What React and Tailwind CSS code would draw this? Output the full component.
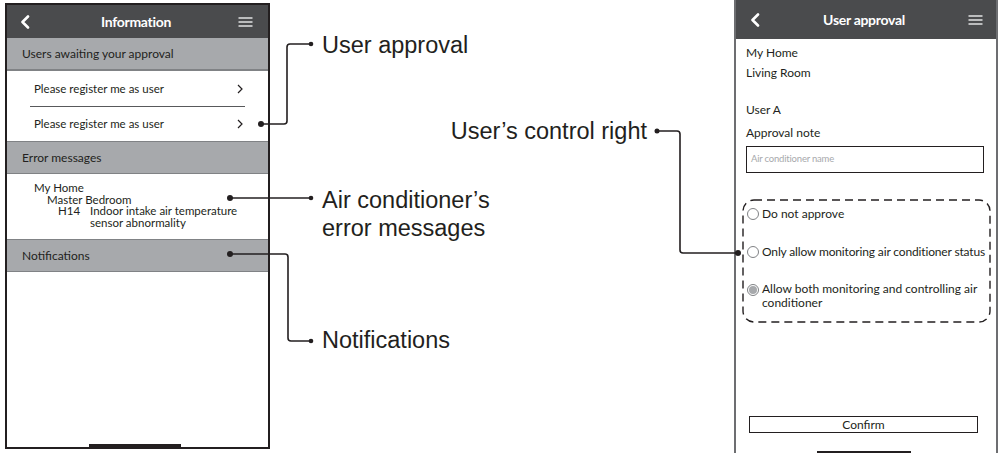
import React from "react";

const ink = "#231f20";

function Back() {
  return (
    <svg width="10" height="14" viewBox="0 0 10 14">
      <polyline points="8,1.5 2.5,7 8,12.5" fill="none" stroke="#fff" strokeWidth="2.6" strokeLinecap="round" strokeLinejoin="round" />
    </svg>
  );
}

function Menu() {
  return (
    <svg width="15" height="10" viewBox="0 0 15 10">
      <line x1="0.5" y1="1" x2="14.5" y2="1" stroke="#d9dadb" strokeWidth="1.6" />
      <line x1="0.5" y1="5" x2="14.5" y2="5" stroke="#d9dadb" strokeWidth="1.6" />
      <line x1="0.5" y1="9" x2="14.5" y2="9" stroke="#d9dadb" strokeWidth="1.6" />
    </svg>
  );
}

function Chevron() {
  return (
    <svg width="6" height="10" viewBox="0 0 6 10">
      <polyline points="1,1 5,5 1,9" fill="none" stroke={ink} strokeWidth="1.2" />
    </svg>
  );
}

function Band({ children }) {
  return (
    <div className="flex h-[33px] shrink-0 items-center border-y border-[#808285] bg-[#a7a9ac] pl-[15px] text-[12px] text-[#231f20]">
      {children}
    </div>
  );
}

function Radio({ on }) {
  return (
    <span className="mt-[2px] flex h-[12px] w-[12px] shrink-0 items-center justify-center rounded-full border border-[#808285] bg-white">
      {on && <span className="h-[8px] w-[8px] rounded-full bg-[#a7a9ac]" />}
    </span>
  );
}

function Callouts() {
  return (
    <svg className="pointer-events-none absolute inset-0" width="998" height="453" viewBox="0 0 998 453">
      <g fill="none" stroke={ink} strokeWidth="1.6">
        <path d="M261 124 H284 Q287 124 287 121 V47 Q287 44 290 44 H311" />
        <path d="M230 198 H311" />
        <path d="M230 254 H285 Q288 254 288 257 V338 Q288 341 291 341 H311" />
        <path d="M657 131 H677 Q680 131 680 134 V250 Q680 253 683 253 H738" />
        <rect x="743" y="200" width="247" height="122" rx="11" strokeWidth="1.4" strokeDasharray="8 5" />
      </g>
      <g fill={ink}>
        <circle cx="261" cy="124" r="3" />
        <circle cx="311" cy="44" r="2.3" />
        <circle cx="230" cy="198" r="3" />
        <circle cx="311" cy="198" r="2.3" />
        <circle cx="230" cy="254" r="3" />
        <circle cx="311" cy="341" r="2.3" />
        <circle cx="657" cy="131" r="2.5" />
        <circle cx="738" cy="253" r="3" />
      </g>
    </svg>
  );
}

export default function App() {
  return (
    <div className="relative flex h-[453px] w-[998px] overflow-hidden bg-white font-[Lato,sans-serif] text-[#231f20]">
      {/* Information screen */}
      <div className="ml-[5px] mt-[3px] flex h-[446px] w-[265px] shrink-0 flex-col border-2 border-[#231f20]">
        <div className="flex h-[33px] shrink-0 items-center justify-between bg-[#4a4b4d] pl-[13px] pr-[15px]">
          <Back />
          <span className="ml-[4px] text-[14px] font-bold tracking-[-0.3px] text-white">Information</span>
          <Menu />
        </div>
        <div className="flex h-[33px] shrink-0 items-center border-b-2 border-[#808285] bg-[#a7a9ac] pl-[15px] text-[12px]">
          Users awaiting your approval
        </div>
        <div className="flex h-[35px] shrink-0 items-center justify-between pl-[27px] pr-[25px] text-[11.5px]">
          <span>Please register me as user</span>
          <Chevron />
        </div>
        <div className="ml-[23px] h-px w-[215px] bg-[#58595b]" />
        <div className="flex h-[34px] shrink-0 items-center justify-between pl-[27px] pr-[25px] text-[11.5px]">
          <span>Please register me as user</span>
          <Chevron />
        </div>
        <Band>Error messages</Band>
        <div className="h-[65px] shrink-0 pl-[27px] pt-[8px] text-[11.5px] leading-[11.5px]">
          <div>My Home</div>
          <div className="pl-[13px]">Master Bedroom</div>
          <div className="flex pl-[24px]">
            <span className="w-[32px]">H14</span>
            <span>
              Indoor intake air temperature
              <br />
              sensor abnormality
            </span>
          </div>
        </div>
        <Band>Notifications</Band>
        <div className="flex flex-1 flex-col justify-end">
          <div className="ml-[82px] h-[3px] w-[92px] bg-[#231f20]" />
        </div>
      </div>

      {/* callout labels */}
      <div className="relative flex-1 font-['Liberation_Sans',Arial,sans-serif] text-[23.5px] leading-[28px]">
        <div className="absolute left-[52px] top-[31px]">User approval</div>
        <div className="absolute left-[52px] top-[186px]">
          Air conditioner’s
          <br />
          error messages
        </div>
        <div className="absolute left-[52px] top-[326px]">Notifications</div>
        <div className="absolute right-[87px] top-[117px] whitespace-nowrap">User’s control right</div>
      </div>

      {/* User approval screen */}
      <div className="flex h-[453px] w-[264px] shrink-0 flex-col border-x-2 border-[#6d6e71]">
        <div className="flex h-[39px] shrink-0 items-center justify-between bg-[#4a4b4d] pl-[14px] pr-[13px]">
          <Back />
          <span className="text-[14px] font-bold tracking-[-0.3px] text-white">User approval</span>
          <Menu />
        </div>
        <div className="flex flex-1 flex-col pl-[10px] text-[12px]">
          <div className="mt-[4px] leading-[20px]">My Home</div>
          <div className="leading-[20px]">Living Room</div>
          <div className="mt-[17px] leading-[20px]">User A</div>
          <div className="mt-[3px] leading-[20px]">Approval note</div>
          <div className="mt-[3px] flex h-[27px] w-[238px] items-center border-[1.5px] border-[#231f20] pl-[4px] text-[9.5px] tracking-[-0.2px] text-[#a7a9ac]">
            Air conditioner name
          </div>
          <div className="ml-[1px] mt-[33px] flex items-start gap-[3px] leading-[16px]">
            <Radio />
            <span>Do not approve</span>
          </div>
          <div className="ml-[1px] mt-[22px] flex items-start gap-[3px] leading-[16px] tracking-[-0.15px]">
            <Radio />
            <span>Only allow monitoring air conditioner status</span>
          </div>
          <div className="ml-[1px] mt-[22px] flex items-start gap-[3px] leading-[14px]">
            <Radio on />
            <span>
              Allow both monitoring and controlling air
              <br />
              conditioner
            </span>
          </div>
          <div className="flex-1" />
          <div className="ml-[3px] flex h-[17px] w-[229px] items-center justify-center border-[1.5px] border-[#231f20] text-[12px]">
            Confirm
          </div>
          <div className="ml-[71px] mt-[18px] h-[2px] w-[94px] bg-[#231f20]" />
        </div>
      </div>

      <Callouts />
    </div>
  );
}
